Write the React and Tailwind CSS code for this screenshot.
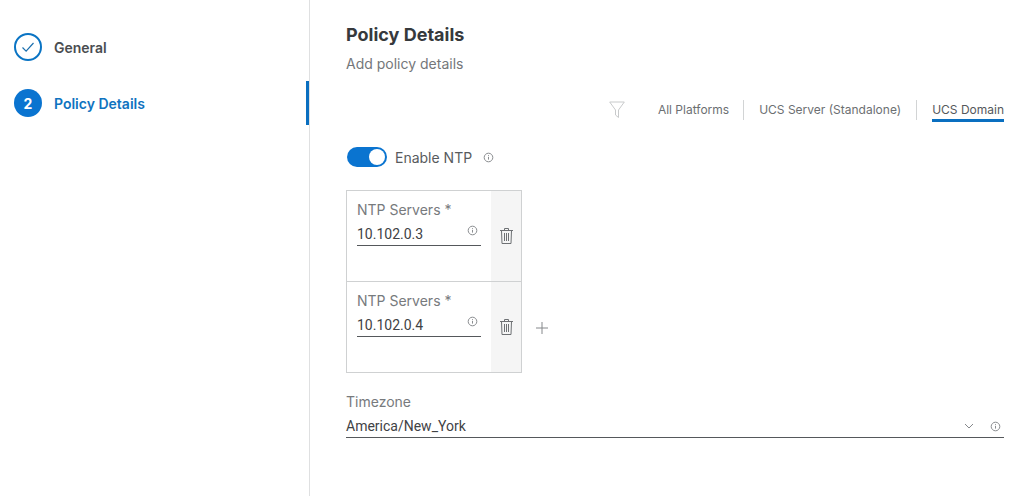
import React from "react";

const Info = ({ className = "" }) => (
  <svg width="11" height="11" viewBox="0 0 11 11" fill="none" className={className}>
    <circle cx="5.5" cy="5.5" r="4.3" stroke="#8a8d90" strokeWidth="1" />
    <path d="M5.5 3.2v.9M5.5 4.9v2.7" stroke="#8a8d90" strokeWidth="1" />
  </svg>
);

const Trash = () => (
  <svg width="13" height="16" viewBox="0 0 13 16" fill="none" stroke="#6e7174" strokeWidth="1">
    <path d="M0 2.5h13M4.5 2.5V.5h4v2M1.5 2.5l.5 13h9l.5-13M4.5 5v8M6.5 5v8M8.5 5v8" />
  </svg>
);

const ServerCard = ({ value, top }) => (
  <div className={`flex ${top ? "h-[90px]" : "h-[91px] border-t border-[#cfd1d2]"}`}>
    <div className="w-[144px] pl-[10px] pr-[10px] pt-[10px]">
      <div className="text-[14px] leading-[17px] text-[#777a7d]">NTP Servers *</div>
      <div className="relative mt-[6px] h-[22px] border-b border-[#55585b] font-['Roboto',sans-serif] text-[14px] leading-[20px] text-[#3f4245]">
        {value}
        <Info className="absolute right-[3px] top-[1px]" />
      </div>
    </div>
    <div className="flex w-[30px] items-center justify-center bg-[#f5f5f5]">
      <Trash />
    </div>
  </div>
);

export default function App() {
  return (
    <div className="flex h-[496px] w-[1033px] overflow-hidden bg-white font-['Inter',sans-serif]">
      <aside className="relative w-[310px] shrink-0 border-r border-[#dfe0e1] pl-[14px] pt-[33px]">
        <div className="flex h-[28px] items-center gap-[12px]">
          <div className="flex h-[28px] w-[28px] items-center justify-center rounded-full border-2 border-[#0a74c4]">
            <svg width="14" height="12" viewBox="0 0 14 12" fill="none">
              <path d="M1.5 6.5l3.6 3.6L12.5 2" stroke="#1b6fae" strokeWidth="1.2" />
            </svg>
          </div>
          <span className="text-[14px] font-semibold text-[#4a4d50]">General</span>
        </div>
        <div className="mt-[28px] flex h-[28px] items-center gap-[12px]">
          <div className="flex h-[28px] w-[28px] items-center justify-center rounded-full bg-[#0a74d0] text-[14px] font-bold text-white">2</div>
          <span className="text-[14px] font-semibold text-[#0f73c0]">Policy Details</span>
        </div>
        <div className="absolute right-0 top-[81px] h-[44px] w-[3px] bg-[#0a6fc0]" />
      </aside>

      <main className="flex-1 pl-[36px] pr-[29px]">
        <h1 className="mt-[23px] text-[18px] font-bold leading-[24px] text-[#36393c]">Policy Details</h1>
        <p className="mt-[7px] text-[14px] leading-[20px] text-[#74777a]">Add policy details</p>

        <div className="mt-[23px] flex h-[26px] items-center justify-end text-[12px] text-[#6c6f72]">
          <svg width="16" height="18" viewBox="0 0 16 18" fill="none" className="mr-[33px]">
            <path d="M.7 1h14.6L9.5 9v7.5L6.5 14V9z" stroke="#c8cacb" strokeWidth="1" />
          </svg>
          <span className="pr-[14px]">All Platforms</span>
          <span className="h-[20px] w-px bg-[#d2d4d5]" />
          <span className="px-[15px]">UCS Server (Standalone)</span>
          <span className="h-[20px] w-px bg-[#d2d4d5]" />
          <span className="relative ml-[15px] text-[#55585b]">
            UCS Domain
            <span className="absolute -bottom-[3px] left-0 right-0 h-[3px] bg-[#0a6fc0]" />
          </span>
        </div>

        <div className="mt-[23px] flex h-[22px] items-center">
          <div className="relative ml-[1px] h-[20px] w-[40px] rounded-full bg-[#0a74d0]">
            <div className="absolute right-[2px] top-[2px] h-[16px] w-[16px] rounded-full bg-white" />
          </div>
          <span className="ml-[8px] text-[14px] text-[#585b5e]">Enable NTP</span>
          <Info className="ml-[11px]" />
        </div>

        <div className="mt-[22px] flex items-center">
          <div className="w-[176px] border border-[#cfd1d2]">
            <ServerCard value="10.102.0.3" top />
            <ServerCard value="10.102.0.4" />
          </div>
          <svg width="14" height="14" viewBox="0 0 14 14" fill="none" className="ml-[13px] mt-[93px]">
            <path d="M7 1v12M1 7h12" stroke="#85888b" strokeWidth="1" />
          </svg>
        </div>

        <div className="mt-[20px] text-[14px] leading-[18px] text-[#777a7d]">Timezone</div>
        <div className="mt-[4px] flex h-[23px] items-center justify-between border-b border-[#55585b] font-['Roboto',sans-serif] text-[14px] text-[#3f4245]">
          <span>America/New_York</span>
          <span className="flex items-center gap-[16px] pr-[3px]">
            <svg width="10" height="6" viewBox="0 0 10 6" fill="none">
              <path d="M1 1l4 4 4-4" stroke="#85888b" strokeWidth="1" />
            </svg>
            <Info />
          </span>
        </div>
      </main>
    </div>
  );
}
